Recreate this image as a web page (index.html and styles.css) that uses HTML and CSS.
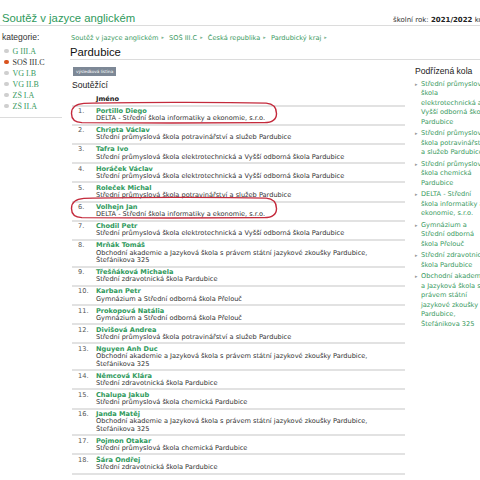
FILE: index.html
```html
<!DOCTYPE html>
<html lang="cs">
<head>
<meta charset="utf-8">
<title>Soutěž v jazyce anglickém</title>
<link rel="stylesheet" href="styles.css">
</head>
<body>
<div class="page">
  <header class="top">
    <h1 class="site-title">Soutěž v jazyce anglickém</h1>
    <div class="year">školní rok: <b>2021/2022</b> kolo: krajské</div>
  </header>
  <div class="layout">
    <aside class="cats">
      <h2 class="cats-title">kategorie:</h2>
      <ul class="cat-list">
        <li><a href="#">G III.A</a></li>
        <li class="active"><a href="#">SOŠ III.C</a></li>
        <li><a href="#">VG I.B</a></li>
        <li><a href="#">VG II.B</a></li>
        <li><a href="#">ZŠ I.A</a></li>
        <li><a href="#">ZŠ II.A</a></li>
      </ul>
    </aside>
    <main class="main">
      <nav class="crumbs">
        <a href="#">Soutěž v jazyce anglickém</a><span class="sep">▸</span>
        <a href="#">SOŠ III.C</a><span class="sep">▸</span>
        <a href="#">Česká republika</a><span class="sep">▸</span>
        <a href="#">Pardubický kraj</a><span class="sep">▸</span>
      </nav>
      <h2 class="place">Pardubice</h2>
      <div class="cols">
        <section class="results">
          <span class="badge">výsledková listina</span>
          <h3 class="sub-title">Soutěžící</h3>
          <div class="table-wrap">
            <table class="list">
              <thead>
                <tr><th class="num"></th><th>Jméno</th></tr>
              </thead>
              <tbody>
                <tr><td class="num">1.</td><td><a class="name" href="#">Portillo Diego</a><div class="school">DELTA - Střední škola informatiky a ekonomie, s.r.o.</div></td></tr>
                <tr><td class="num">2.</td><td><a class="name" href="#">Chripta Václav</a><div class="school">Střední průmyslová škola potravinářství a služeb Pardubice</div></td></tr>
                <tr><td class="num">3.</td><td><a class="name" href="#">Tafra Ivo</a><div class="school">Střední průmyslová škola elektrotechnická a Vyšší odborná škola Pardubice</div></td></tr>
                <tr><td class="num">4.</td><td><a class="name" href="#">Horáček Václav</a><div class="school">Střední průmyslová škola elektrotechnická a Vyšší odborná škola Pardubice</div></td></tr>
                <tr><td class="num">5.</td><td><a class="name" href="#">Roleček Michal</a><div class="school">Střední průmyslová škola potravinářství a služeb Pardubice</div></td></tr>
                <tr><td class="num">6.</td><td><a class="name" href="#">Volhejn Jan</a><div class="school">DELTA - Střední škola informatiky a ekonomie, s.r.o.</div></td></tr>
                <tr><td class="num">7.</td><td><a class="name" href="#">Chodil Petr</a><div class="school">Střední průmyslová škola elektrotechnická a Vyšší odborná škola Pardubice</div></td></tr>
                <tr><td class="num">8.</td><td><a class="name" href="#">Mrňák Tomáš</a><div class="school">Obchodní akademie a Jazyková škola s právem státní jazykové zkoušky Pardubice, Štefánikova 325</div></td></tr>
                <tr><td class="num">9.</td><td><a class="name" href="#">Třešňáková Michaela</a><div class="school">Střední zdravotnická škola Pardubice</div></td></tr>
                <tr><td class="num">10.</td><td><a class="name" href="#">Karban Petr</a><div class="school">Gymnázium a Střední odborná škola Přelouč</div></td></tr>
                <tr><td class="num">11.</td><td><a class="name" href="#">Prokopová Natália</a><div class="school">Gymnázium a Střední odborná škola Přelouč</div></td></tr>
                <tr><td class="num">12.</td><td><a class="name" href="#">Divišová Andrea</a><div class="school">Střední průmyslová škola potravinářství a služeb Pardubice</div></td></tr>
                <tr><td class="num">13.</td><td><a class="name" href="#">Nguyen Anh Duc</a><div class="school">Obchodní akademie a Jazyková škola s právem státní jazykové zkoušky Pardubice, Štefánikova 325</div></td></tr>
                <tr><td class="num">14.</td><td><a class="name" href="#">Němcová Klára</a><div class="school">Střední zdravotnická škola Pardubice</div></td></tr>
                <tr><td class="num">15.</td><td><a class="name" href="#">Chalupa Jakub</a><div class="school">Střední průmyslová škola chemická Pardubice</div></td></tr>
                <tr><td class="num">16.</td><td><a class="name" href="#">Janda Matěj</a><div class="school">Obchodní akademie a Jazyková škola s právem státní jazykové zkoušky Pardubice, Štefánikova 325</div></td></tr>
                <tr><td class="num">17.</td><td><a class="name" href="#">Pojmon Otakar</a><div class="school">Střední průmyslová škola chemická Pardubice</div></td></tr>
                <tr><td class="num">18.</td><td><a class="name" href="#">Šára Ondřej</a><div class="school">Střední zdravotnická škola Pardubice</div></td></tr>
              </tbody>
            </table>
            <svg class="ring ring-1" viewBox="0 0 210 24" preserveAspectRatio="none" aria-hidden="true"><path d="M14 2.5 C60 1.2 150 1 198 2.2 C207 3 208.5 8 208.5 13 C208.5 19 205 22.5 196 22.6 C150 23 60 23.2 12 22.6 C4 22.2 1.5 18 1.5 13 C1.5 7 5 3.2 14 2.5 Z"/></svg>
            <svg class="ring ring-2" viewBox="0 0 210 24" preserveAspectRatio="none" aria-hidden="true"><path d="M14 2.5 C60 1.2 150 1 198 2.2 C207 3 208.5 8 208.5 13 C208.5 19 205 22.5 196 22.6 C150 23 60 23.2 12 22.6 C4 22.2 1.5 18 1.5 13 C1.5 7 5 3.2 14 2.5 Z"/></svg>
          </div>
        </section>
        <aside class="subs">
          <h3 class="sub-title">Podřízená kola</h3>
          <ul class="sub-list">
            <li><a href="#">Střední průmyslová škola elektrotechnická a Vyšší odborná škola Pardubice</a></li>
            <li><a href="#">Střední průmyslová škola potravinářství a služeb Pardubice</a></li>
            <li><a href="#">Střední průmyslová škola chemická Pardubice</a></li>
            <li><a href="#">DELTA - Střední škola informatiky a ekonomie, s.r.o.</a></li>
            <li><a href="#">Gymnázium a Střední odborná škola Přelouč</a></li>
            <li><a href="#">Střední zdravotnická škola Pardubice</a></li>
            <li><a href="#">Obchodní akademie a Jazyková škola s právem státní jazykové zkoušky Pardubice, Štefánikova 325</a></li>
          </ul>
        </aside>
      </div>
    </main>
  </div>
</div>
</body>
</html>
```
FILE: styles.css
```css
html, body {
  margin: 0;
  padding: 0;
  overflow: hidden;
  background: #fff;
}
body {
  font-family: "DejaVu Sans", Verdana, sans-serif;
  font-size: 6.6px;
  color: #333;
}
a { text-decoration: none; color: #2f9a5c; }
ul { list-style: none; margin: 0; padding: 0; }
h1, h2, h3 { margin: 0; font-weight: normal; }

.page { width: 500px; }

.top {
  display: grid;
  grid-template-columns: 391px auto;
  align-items: baseline;
  padding: 11.5px 0 0 2px;
  height: 13.5px;
  border-bottom: 1px solid #dcdcdc;
  overflow: hidden;
}
.site-title {
  font-family: "Liberation Sans", Arial, sans-serif;
  font-size: 11.3px;
  line-height: 13px;
  color: #2f9a5c;
}
.year {
  font-size: 7px;
  white-space: nowrap;
  color: #333;
}
.year b { font-weight: bold; color: #222; }

.layout {
  display: flex;
  align-items: flex-start;
}

.cats {
  width: 62px;
  flex: none;
  padding-top: 6px;
  padding-bottom: 5px;
  border-bottom: 1px solid #dcdcdc;
}
.cats-title {
  font-family: "Liberation Sans", Arial, sans-serif;
  font-size: 8.5px;
  line-height: 10px;
  padding-left: 2px;
  color: #333;
}
.cat-list { margin-top: 3.5px; }
.cat-list li {
  display: flex;
  align-items: center;
  gap: 4px;
  height: 11px;
  padding-left: 4px;
  font-family: "Liberation Serif", "Times New Roman", serif;
  font-size: 8px;
}
.cat-list li::before {
  content: "";
  width: 4.5px;
  height: 4.5px;
  border-radius: 50%;
  background: #cfcfcf;
}
.cat-list li.active::before { background: #d9531e; }
.cat-list li a { color: #3a9a62; }
.cat-list li.active a { color: #333; }

.main { flex: 1; padding-top: 7px; }

.crumbs {
  padding-left: 9px;
  line-height: 8px;
  white-space: nowrap;
}
.crumbs a { color: #3a9a62; }
.crumbs .sep {
  font-size: 5px;
  color: #7fb592;
  margin: 0 3px;
  vertical-align: 1px;
}

.place {
  margin: 3.5px 0 0 8px;
  font-family: "Liberation Sans", Arial, sans-serif;
  font-size: 11.3px;
  line-height: 13px;
  color: #111;
  border-bottom: 1px solid #dcdcdc;
}

.cols {
  display: flex;
  align-items: flex-start;
  padding-left: 10px;
}

.results {
  width: 333px;
  flex: none;
  padding-top: 7px;
}
.badge {
  display: inline-block;
  margin-left: 1px;
  padding: 0 3px;
  height: 9px;
  line-height: 9px;
  font-size: 4.2px;
  color: #fff;
  background: #7d8896;
  vertical-align: top;
}
.sub-title {
  font-family: "Liberation Sans", Arial, sans-serif;
  font-size: 8.6px;
  line-height: 10px;
  color: #222;
}
.results .sub-title { margin-top: 4px; }

.table-wrap { position: relative; margin-top: 5px; }

.list {
  width: 100%;
  border-collapse: collapse;
}
.list th {
  text-align: left;
  font-weight: bold;
  line-height: 8px;
  padding: 0 0 2px;
  color: #222;
  border-bottom: 2px solid #e2e2e2;
}
.list td {
  vertical-align: top;
  padding: 0.5px 0 1px;
  border-bottom: 2px solid #e2e2e2;
}
.list .num {
  width: 24px;
  padding-left: 6px;
  box-sizing: border-box;
  line-height: 8.2px;
  color: #555;
}
.name {
  display: block;
  font-weight: bold;
  line-height: 8.2px;
  color: #2f9a5c;
}
.school {
  line-height: 7.5px;
  color: #333;
}

.ring {
  position: absolute;
  left: -2px;
  width: 208px;
  height: 23px;
  overflow: visible;
}
.ring path {
  fill: none;
  stroke: #c42a3c;
  stroke-width: 1.4px;
  vector-effect: non-scaling-stroke;
}
.ring-1 { top: 6px; }
.ring-2 { top: 101px; }

.subs {
  width: 74px;
  flex: none;
  margin-left: 10px;
  padding-top: 6px;
}
.sub-list { margin-top: 4px; }
.sub-list li {
  position: relative;
  padding-left: 6px;
  line-height: 9.5px;
  margin-bottom: 2px;
}
.sub-list li::before {
  content: "▸";
  position: absolute;
  left: 0;
  top: 0;
  font-size: 5px;
  color: #999;
}
.sub-list a { color: #3a9a62; }
```
